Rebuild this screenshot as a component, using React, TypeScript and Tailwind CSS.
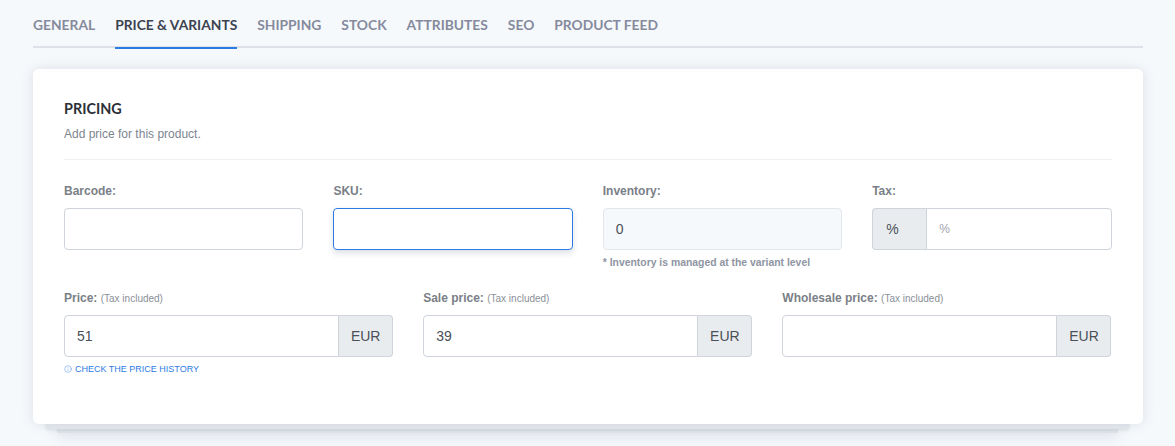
import { Info } from "lucide-react";

const tabs = ["GENERAL", "PRICE & VARIANTS", "SHIPPING", "STOCK", "ATTRIBUTES", "SEO", "PRODUCT FEED"];

const inputBase = "h-[42px] w-full rounded-[4px] border px-3 text-[14px] text-[#495057] outline-none";

const Label = ({ text }: { text: string }) => (
  <label className="block h-[17px] text-[12px] leading-[17px] font-bold text-[#7a8087]">{text}</label>
);

const PriceField = ({ label, value }: { label: string; value: string }) => (
  <div>
    <div className="h-[17px] text-[12px] leading-[17px] font-bold text-[#7a8087]">
      {label} <span className="text-[10px] font-normal text-[#8a9098]">(Tax included)</span>
    </div>
    <div className="mt-[8px] flex h-[42px]">
      <input
        defaultValue={value}
        className="h-full min-w-0 flex-1 rounded-l-[4px] border border-[#ced4da] bg-white px-3 text-[14px] text-[#495057] outline-none"
      />
      <span className="flex h-full w-[54px] items-center justify-center rounded-r-[4px] border border-l-0 border-[#ced4da] bg-[#e9ecef] text-[14px] text-[#495057]">
        EUR
      </span>
    </div>
  </div>
);

export default function App() {
  return (
    <div className="h-[446px] w-[1175px] overflow-hidden bg-[#f6f9fc] pr-[32px] pl-[33px] font-['Liberation_Sans',sans-serif]">
      <nav className="flex h-[48px] gap-[20px] border-b-2 border-[#dee2e8] font-['Lato',sans-serif] text-[13.8px] font-bold">
        {tabs.map((tab) => (
          <a
            key={tab}
            className={
              tab === "PRICE & VARIANTS"
                ? "-mb-[2px] h-[49px] border-b-2 border-[#2c7be5] pt-[16px] leading-[18px] text-[#3b4350]"
                : "pt-[16px] leading-[18px] text-[#858a9c]"
            }
          >
            {tab}
          </a>
        ))}
      </nav>

      <div className="relative mt-[21px]">
        <div className="absolute -bottom-[9px] left-[24px] right-[25px] h-10 bg-[#dfe3ea] shadow-[0_4px_14px_rgba(140,152,164,0.22)]" />
        <div className="absolute -bottom-[5px] left-[13px] right-[14px] h-10 bg-[#e6e9ef] shadow-[0_1px_3px_rgba(140,152,164,0.2)]" />
        <section className="relative h-[355px] rounded-[6px] bg-white pt-[31px] pr-[31.5px] pl-[31px] shadow-[0_0_12px_rgba(140,152,164,0.25)]">
          <h2 className="text-[14.4px] leading-[18px] font-bold text-[#2b2f36] font-['Lato',sans-serif]">PRICING</h2>
          <p className="mt-[8px] text-[12px] leading-[16px] text-[#7d8590]">Add price for this product.</p>
          <div className="mt-[17px] h-px bg-[#f1f2f4]" />

          <div className="mt-[23px] grid grid-cols-4 gap-x-[30px]">
            <div>
              <Label text="Barcode:" />
              <input className={`mt-[8px] ${inputBase} border-[#ced4da] bg-white`} />
            </div>
            <div>
              <Label text="SKU:" />
              <input className={`mt-[8px] ${inputBase} border-[#2c7be5] bg-white shadow-[0_3px_6px_rgba(60,80,110,0.18)]`} />
            </div>
            <div>
              <Label text="Inventory:" />
              <input readOnly defaultValue="0" className={`mt-[8px] ${inputBase} border-[#e3e7ec] bg-[#f6f9fc]`} />
              <p className="mt-[6px] text-[10.4px] leading-[14px] font-bold text-[#8f95a3]">
                * Inventory is managed at the variant level
              </p>
            </div>
            <div>
              <Label text="Tax:" />
              <div className="mt-[8px] flex h-[42px]">
                <span className="flex h-full w-[54px] items-center rounded-l-[4px] border border-r-0 border-[#ced4da] bg-[#e9ecef] pl-[13px] text-[14px] text-[#495057]">
                  %
                </span>
                <input
                  placeholder="%"
                  className="h-full min-w-0 flex-1 rounded-r-[4px] border border-[#ced4da] bg-white px-3 text-[12px] text-[#495057] outline-none placeholder:text-[#a0a5ad]"
                />
              </div>
            </div>
          </div>

          <div className="mt-[20px] grid grid-cols-3 gap-x-[30px]">
            <div>
              <PriceField label="Price:" value="51" />
              <a className="mt-[6px] flex items-center gap-[3px] text-[9px] leading-[12px] text-[#2c7be5]">
                <Info size={8} strokeWidth={1.25} />
                CHECK THE PRICE HISTORY
              </a>
            </div>
            <PriceField label="Sale price:" value="39" />
            <PriceField label="Wholesale price:" value="" />
          </div>
        </section>
      </div>
    </div>
  );
}
